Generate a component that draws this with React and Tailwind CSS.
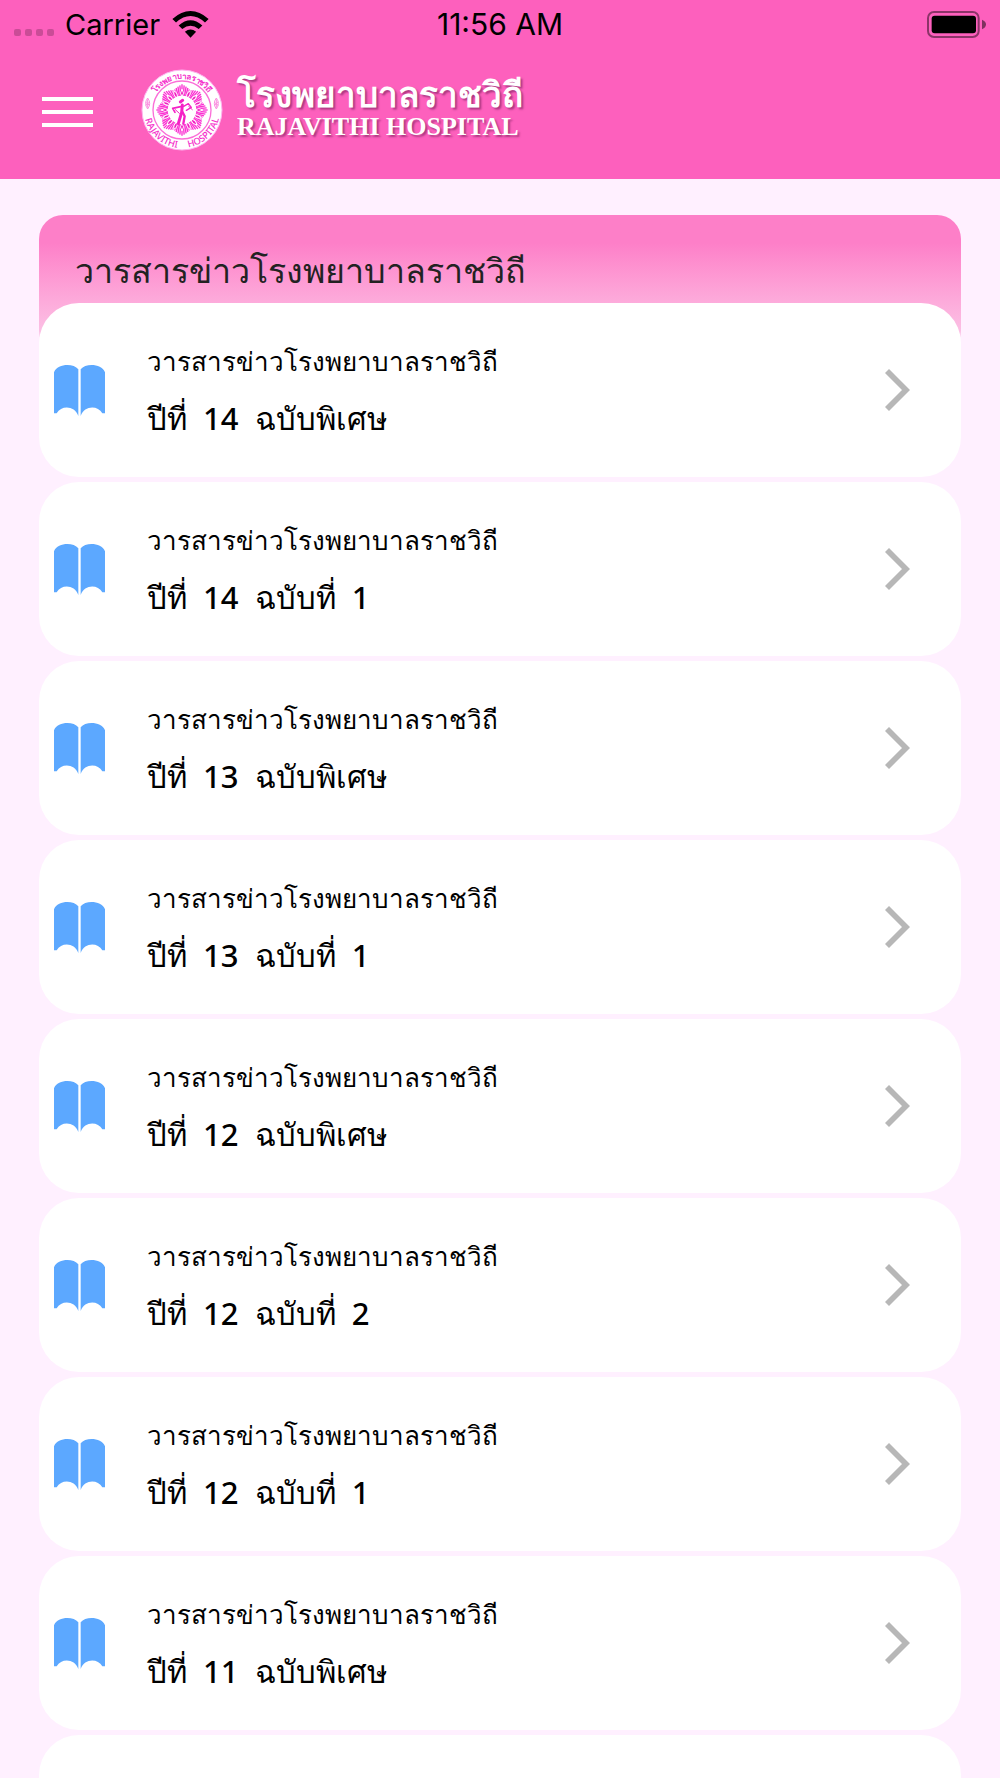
import React from 'react'

const JOURNAL_NAME = 'วารสารข่าวโรงพยาบาลราชวิถี'

const issues = [
  { id: 1, year: '14', issue: 'ฉบับพิเศษ' },
  { id: 2, year: '14', issue: 'ฉบับที่  1' },
  { id: 3, year: '13', issue: 'ฉบับพิเศษ' },
  { id: 4, year: '13', issue: 'ฉบับที่  1' },
  { id: 5, year: '12', issue: 'ฉบับพิเศษ' },
  { id: 6, year: '12', issue: 'ฉบับที่  2' },
  { id: 7, year: '12', issue: 'ฉบับที่  1' },
  { id: 8, year: '11', issue: 'ฉบับพิเศษ' },
  { id: 9, year: '11', issue: 'ฉบับที่  1' },
]

const WifiIcon = () => (
  <svg viewBox="0 0 110 82" className="h-[27px] w-[37px]" aria-hidden="true">
    <path d="M0 24 Q55 -24 110 24 L99 35 Q55 -4 11 35 Z" />
    <path d="M19 44 Q55 12 91 44 L80 55 Q55 34 30 55 Z" />
    <path d="M38 63 Q55 50 72 63 L55 81 Z" />
  </svg>
)

const BatteryIcon = () => (
  <svg viewBox="0 0 177 81" className="h-[27px] w-[59px]" aria-hidden="true">
    <rect x="3" y="3" width="152" height="75" rx="18" fill="none" stroke="#000" strokeOpacity="0.45" strokeWidth="6" />
    <rect x="14" y="14" width="133" height="53" rx="9" />
    <path d="M165 26 Q177 31 177 40 Q177 50 165 55 Z" opacity="0.5" />
  </svg>
)

const StatusBar = () => (
  <div className="grid h-12 grid-cols-3 items-center px-[14px] leading-none text-black">
    <div className="flex items-center">
      <div className="mt-4 flex gap-1">
        {[0, 1, 2, 3].map((dot) => (
          <span key={dot} className="h-[7px] w-[7px] rounded-xs bg-black/20" />
        ))}
      </div>
      <span className="mr-3 ml-[11px] text-[29px]">Carrier</span>
      <WifiIcon />
    </div>
    <span className="text-center text-[30px]">11:56 AM</span>
    <div className="flex justify-end">
      <BatteryIcon />
    </div>
  </div>
)

const rays = Array.from({ length: 72 }, (_, i) => i * 5)
const petals = Array.from({ length: 16 }, (_, i) => i * 22.5)

// outer edge of the rosette, longest at each of its eight points
const rayLength = (angle) => {
  const offset = Math.abs((angle % 45) - 22.5) / 22.5
  return 64 + offset * 13
}

const Seal = () => (
  <svg viewBox="0 0 246 246" className="h-[82px] w-[82px] shrink-0" role="img" aria-label="Rajavithi Hospital seal">
    <defs>
      <path id="seal-top" d="M30 123 A93 93 0 0 1 216 123" />
      <path id="seal-bottom" d="M9 123 A114 114 0 0 0 237 123" />
    </defs>
    <circle cx="123" cy="123" r="120" fill="#fff" stroke="#fdb5f0" strokeWidth="3" />
    <circle cx="123" cy="123" r="87" fill="none" stroke="#fb6fd8" strokeWidth="4" />
    {rays.map((angle) => (
      <line
        key={angle}
        x1="123"
        y1="80"
        x2="123"
        y2={123 - rayLength(angle)}
        stroke="#fb2fd2"
        strokeWidth="4"
        transform={`rotate(${angle} 123 123)`}
      />
    ))}
    {petals.map((angle) => (
      <path
        key={angle}
        d="M123 60 Q132 73 123 84 Q114 73 123 60 Z"
        fill="#f01bbf"
        stroke="#fff"
        strokeWidth="3"
        transform={`rotate(${angle} 123 123)`}
      />
    ))}
    <circle cx="123" cy="123" r="41" fill="#fff" />
    <g fill="none" stroke="#f521c6" strokeLinecap="round" strokeLinejoin="round">
      <path d="M124 108 L122 130 L112 164" strokeWidth="9" />
      <path d="M124 128 L131 142 L127 164" strokeWidth="7" />
      <path d="M119 113 L95 118 L102 130" strokeWidth="5" />
      <path d="M128 112 L142 104 L151 115 L136 124" strokeWidth="4" />
      <path d="M118 99 L125 94" strokeWidth="9" />
      <path d="M103 122 L115 133 M143 112 L154 122" strokeWidth="3" />
    </g>
    <g fill="none" stroke="#fb8fe0" strokeWidth="3">
      <path d="M20 87 Q8 103 20 120 Q32 103 20 87 Z M20 91 V116 M14 100 L26 109 M26 99 L14 109" />
      <path d="M226 87 Q214 103 226 120 Q238 103 226 87 Z M226 91 V116 M220 100 L232 109 M232 99 L220 109" />
    </g>
    <g fill="#f52fcb" className="font-['Noto_Sans','Liberation_Sans',sans-serif]">
      <text fontSize="24" fontWeight="700" textAnchor="middle">
        <textPath href="#seal-top" startOffset="50%">โรงพยาบาลราชวิถี</textPath>
      </text>
      <text fontSize="28" fontWeight="500" textAnchor="middle">
        <textPath href="#seal-bottom" startOffset="27%">RAJAVITHI</textPath>
      </text>
      <text fontSize="28" fontWeight="500" textAnchor="middle">
        <textPath href="#seal-bottom" startOffset="74%">HOSPITAL</textPath>
      </text>
    </g>
  </svg>
)

const AppHeader = () => (
  <header className="bg-[#fd60bd] pb-7">
    <StatusBar />
    <div className="flex items-center px-[42px] pt-[21px]">
      <button type="button" aria-label="Menu" className="flex w-[51px] flex-col gap-[9px] pt-1">
        <span className="h-1 w-full bg-white" />
        <span className="h-1 w-full bg-white" />
        <span className="h-1 w-full bg-white" />
      </button>
      <a href="#" className="ml-12 flex items-center gap-3.5 text-white">
        <Seal />
        <span className="flex flex-col pb-2 font-['Liberation_Serif',serif] font-bold [text-shadow:2px_2px_2px_rgba(120,30,90,0.6)]">
          <span className="text-[35px] leading-[42px] whitespace-nowrap">โรงพยาบาลราชวิถี</span>
          <span className="text-[26px] leading-5 whitespace-nowrap">RAJAVITHI HOSPITAL</span>
        </span>
      </a>
    </div>
  </header>
)

const BookIcon = () => (
  <svg viewBox="0 0 153 153" className="h-[51px] w-[51px] shrink-0" fill="#5ca8ff" aria-hidden="true">
    <path d="M0 22 C10 -4 58 -6 73 13 V153 C62 121 22 120 8 145 H0 Z" />
    <path d="M153 22 C143 -4 95 -6 80 13 V153 C91 121 131 120 145 145 H153 Z" />
  </svg>
)

const ChevronIcon = () => (
  <svg viewBox="0 0 75 126" className="h-[42px] w-[25px] shrink-0" aria-hidden="true">
    <path d="M6 6 L63 63 L6 120" fill="none" stroke="#b7b7b7" strokeWidth="17" />
  </svg>
)

const IssueCard = ({ year, issue }) => (
  <li>
    <a href="#" className="flex h-[174px] items-center rounded-[40px] bg-white pr-[51px] pl-[15px] text-black">
      <BookIcon />
      <span className="ml-[42px] flex flex-1 flex-col">
        <span className="text-[26px] leading-14">{JOURNAL_NAME}</span>
        <span className="font-['Noto_Sans',sans-serif] text-[31px] leading-14 font-medium whitespace-pre">{`ปีที่  ${year}  ${issue}`}</span>
      </span>
      <ChevronIcon />
    </a>
  </li>
)

const App = () => {
  return (
    <div className="flex h-screen flex-col overflow-hidden bg-[#fff0ff] font-['Inter','Noto_Sans',sans-serif]">
      <AppHeader />
      <main className="min-h-0 flex-1 overflow-y-auto px-[39px] pt-9 [scrollbar-width:none]">
        <div className="rounded-3xl bg-linear-to-b from-[#fd7fc8] from-20% to-[#f9d0ec] px-9 pt-7 pb-14">
          <h1 className="text-[34px] leading-14 text-[#222]">{JOURNAL_NAME}</h1>
        </div>
        <ul className="-mt-[52px] flex flex-col gap-[5px]">
          {issues.map((item) => (
            <IssueCard key={item.id} year={item.year} issue={item.issue} />
          ))}
        </ul>
      </main>
    </div>
  )
}

export default App
